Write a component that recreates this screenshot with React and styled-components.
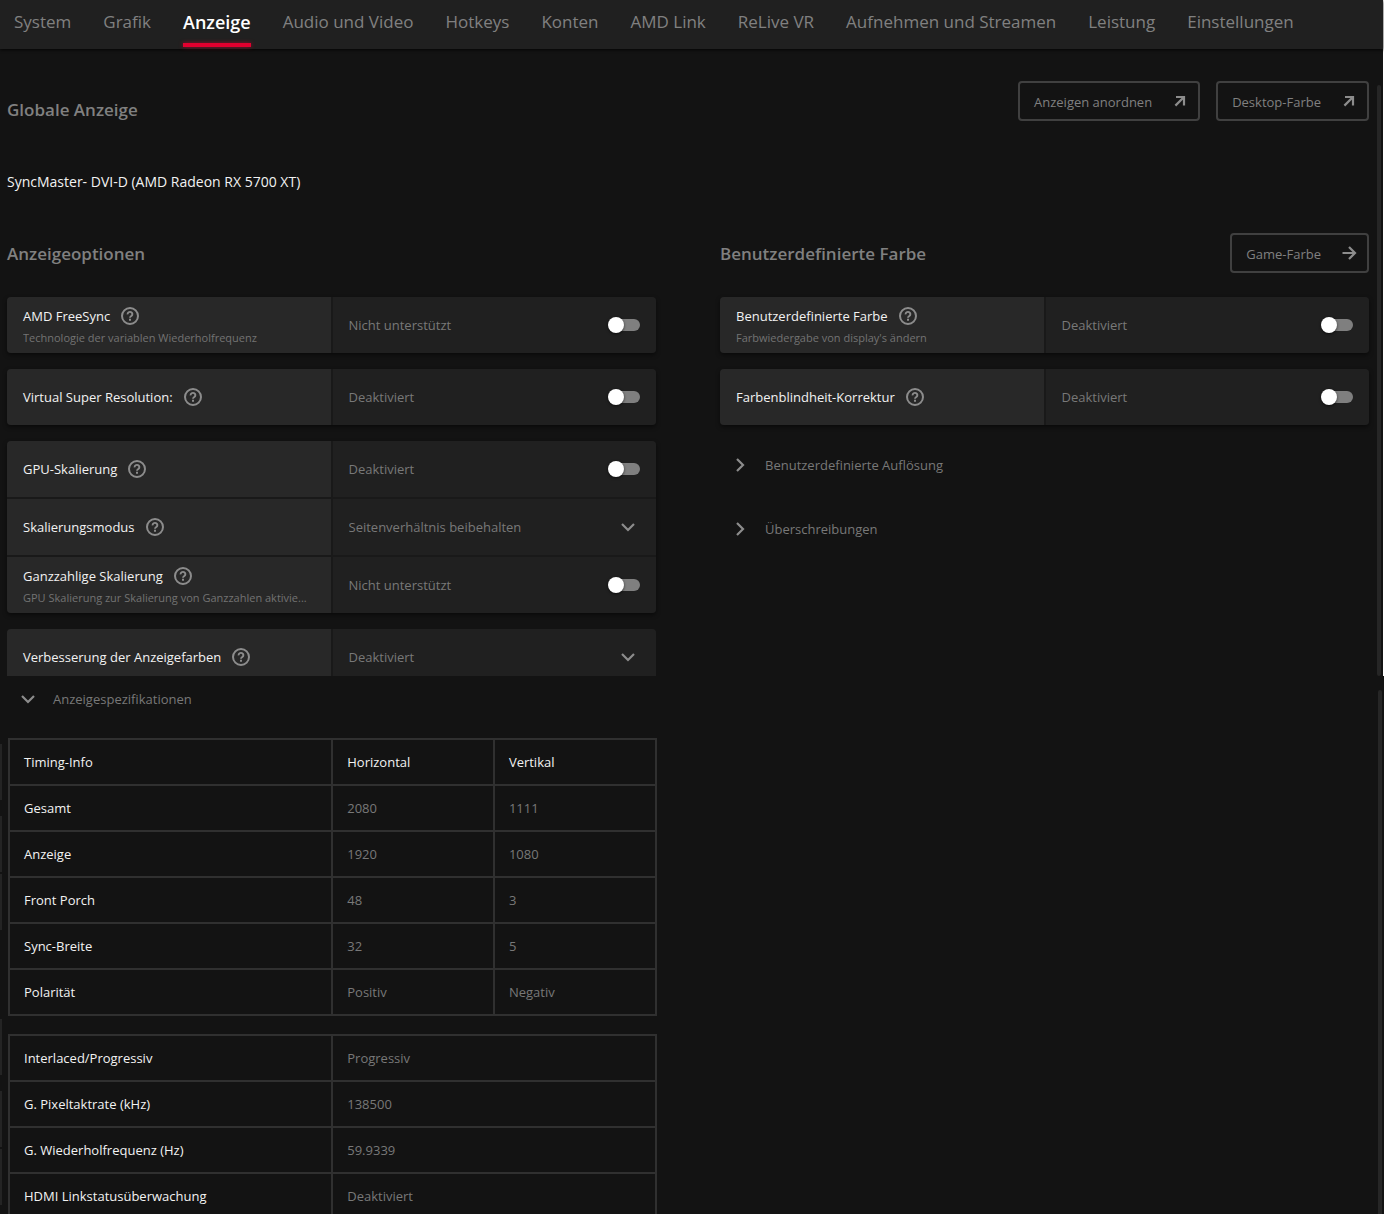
import React, { useState } from 'react';
import styled, { createGlobalStyle } from 'styled-components';

const GlobalStyle = createGlobalStyle`
  * {
    box-sizing: border-box;
  }

  body {
    margin: 0;
    background: #131313;
    color: #f2f2f2;
    font-family: 'Open Sans', 'Noto Sans', sans-serif;
    font-size: 13px;
    line-height: 20px;
    overflow: hidden;
  }

  button,
  select,
  input {
    font: inherit;
    margin: 0;
  }
`;

const MainWindow = styled.div`
  border-right: 1px solid #ffffff;
`;

const Nav = styled.nav`
  display: flex;
  gap: 32px;
  height: 49px;
  padding: 0 14px;
  background: #202020;
  box-shadow: 0 1px 3px rgba(0, 0, 0, 0.8);
`;

const NavLink = styled.a`
  height: 47px;
  padding-top: 10px;
  font-size: ${({ $active }) => ($active ? '18px' : '17px')};
  line-height: 24px;
  white-space: nowrap;
  text-decoration: none;
  font-weight: ${({ $active }) => ($active ? 600 : 400)};
  color: ${({ $active }) => ($active ? '#ffffff' : '#808080')};

  &::after {
    content: '';
    display: ${({ $active }) => ($active ? 'block' : 'none')};
    height: 4px;
    margin-top: 9px;
    background: #e2002f;
    box-shadow: 0 0 4px rgba(226, 0, 47, 0.6);
  }
`;

const Pane = styled.section`
  display: flex;
  padding-right: 2px;
`;

const PaneBody = styled.div`
  flex: 1;
  min-width: 0;
  padding: 0 8px 0 ${({ $left }) => $left};
`;

const ScrollTrack = styled.div`
  width: 4px;
  margin-top: ${({ $top }) => $top};
  border-radius: 2px;
  background: #262626;
`;

const HeaderRow = styled.header`
  display: flex;
  align-items: center;
  justify-content: space-between;
  height: 40px;
  margin-top: ${({ $top }) => $top || 0};
`;

const Heading = styled.h2`
  margin: 0;
  padding-top: ${({ $top }) => $top || '2px'};
  font-size: 17px;
  line-height: 24px;
  font-weight: 600;
  color: #808080;
`;

const ButtonGroup = styled.div`
  display: flex;
  gap: 16px;
`;

const OutlineButton = styled.button`
  display: flex;
  align-items: center;
  justify-content: space-between;
  gap: 20px;
  height: 40px;
  padding: 2px 10px 0 14px;
  border: 2px solid #404040;
  border-radius: 4px;
  background: none;
  color: #808080;
  cursor: pointer;
`;

const DisplayName = styled.p`
  margin: 51px 0 0;
  font-size: 14px;
`;

const Columns = styled.div`
  display: grid;
  grid-template-columns: 1fr 1fr;
  gap: 64px;
  margin-top: 41px;
`;

const Column = styled.div`
  min-width: 0;
`;

const Cards = styled.div`
  display: flex;
  flex-direction: column;
  gap: 16px;
  margin-top: 24px;
`;

const Card = styled.div`
  display: grid;
  gap: 2px;
  border-radius: 4px;
  background: #191919;
  box-shadow: 0 2px 4px rgba(0, 0, 0, 0.5);
  overflow: hidden;
  ${({ $cut }) => $cut && 'height: 47px; border-radius: 4px 4px 0 0; box-shadow: none;'}
`;

const CardRow = styled.div`
  display: grid;
  grid-template-columns: 1fr 1fr;
  gap: 2px;
  height: 56px;
`;

const LabelCell = styled.div`
  display: flex;
  flex-direction: column;
  justify-content: center;
  gap: 2px;
  min-width: 0;
  padding: ${({ $twoLines }) => ($twoLines ? '4px' : 0)} 16px 0;
  background: #282828;
`;

const LabelLine = styled.div`
  display: flex;
  align-items: center;
  gap: 10px;
`;

const HelpButton = styled.button`
  display: flex;
  padding: 0;
  border: 0;
  background: none;
  color: #8c8c8c;
  cursor: pointer;
`;

const Description = styled.div`
  font-size: 11px;
  overflow: hidden;
  text-overflow: ellipsis;
  white-space: nowrap;
  color: #737373;
`;

const ValueCell = styled.div`
  display: flex;
  align-items: center;
  justify-content: space-between;
  padding: 0 16px;
  background: #202020;
  color: #787878;
`;

const Switch = styled.input`
  appearance: none;
  display: grid;
  align-items: center;
  width: 32px;
  height: 16px;
  cursor: pointer;

  &::before,
  &::after {
    content: '';
    grid-area: 1 / 1;
  }

  &::before {
    height: 12px;
    border-radius: 6px;
    background: #7f7f7f;
    margin: 0 ${({ checked }) => (checked ? '2px 0 0' : '0 0 2px')};
  }

  &::after {
    justify-self: ${({ checked }) => (checked ? 'end' : 'start')};
    width: 16px;
    height: 16px;
    border-radius: 50%;
    background: #ffffff;
    box-shadow: 0 1px 3px rgba(0, 0, 0, 0.6);
  }
`;

const SelectWrap = styled.div`
  flex: 1;
  display: grid;
  align-items: center;

  select,
  svg {
    grid-area: 1 / 1;
  }

  svg {
    justify-self: end;
    margin-right: 4px;
    pointer-events: none;
  }
`;

const Select = styled.select`
  appearance: none;
  width: 100%;
  padding: 0;
  border: 0;
  background: none;
  color: inherit;
  cursor: pointer;
`;

const Expanders = styled.div`
  display: flex;
  flex-direction: column;
  gap: 44px;
  margin-top: 30px;
  padding-left: 12px;
`;

const ExpanderButton = styled.button`
  display: flex;
  align-items: center;
  gap: 17px;
  padding: 0;
  border: 0;
  background: none;
  color: #787878;
  cursor: pointer;
`;

const Specs = styled.div`
  width: calc(50% - 32px);
  padding: 13px 0 0 1px;
`;

const SpecsHeader = styled.div`
  padding-left: 12px;
`;

const SpecTable = styled.table`
  width: 100%;
  margin-top: ${({ $top }) => $top};
  border-collapse: collapse;
  table-layout: fixed;

  th,
  td {
    height: 46px;
    padding: 0 14px;
    border: 2px solid #303030;
    text-align: left;
    font-weight: 400;
  }

  td {
    color: #787878;
  }

  th:first-child {
    width: 50%;
  }
`;

/* Sliver of the card list that lies behind the lower pane */
const EdgeStrip = styled.div`
  display: flex;
  flex-direction: column;
  width: 2px;
  padding-top: 68px;
`;

const EdgeCard = styled.div`
  flex: none;
  height: 56px;
  margin-bottom: ${({ $gap }) => $gap};
  background: #242424;
`;

const NAV_ITEMS = [
  'System',
  'Grafik',
  'Anzeige',
  'Audio und Video',
  'Hotkeys',
  'Konten',
  'AMD Link',
  'ReLive VR',
  'Aufnehmen und Streamen',
  'Leistung',
  'Einstellungen',
];

const TIMING_ROWS = [
  ['Gesamt', '2080', '1111'],
  ['Anzeige', '1920', '1080'],
  ['Front Porch', '48', '3'],
  ['Sync-Breite', '32', '5'],
  ['Polarität', 'Positiv', 'Negativ'],
];

const SIGNAL_ROWS = [
  ['Interlaced/Progressiv', 'Progressiv'],
  ['G. Pixeltaktrate (kHz)', '138500'],
  ['G. Wiederholfrequenz (Hz)', '59.9339'],
  ['HDMI Linkstatusüberwachung', 'Deaktiviert'],
];

const ICON_PATHS = {
  down: 'M2 5l6 6 6-6',
  right: 'M5 2l6 6-6 6',
  arrow: 'M1.5 7h12.5M8 1l6 6-6 6',
  external: 'M4 3h8v8.5M12 3l-8.6 8.6',
};

function Icon({ name }) {
  return (
    <svg width="16" height="16" viewBox="0 0 16 16" fill="none" stroke="#8c8c8c" strokeWidth="2.2" aria-hidden="true">
      <path d={ICON_PATHS[name]} />
    </svg>
  );
}

function HelpIcon() {
  return (
    <svg width="20" height="20" viewBox="0 0 20 20" fill="none" stroke="currentColor" strokeWidth="2" aria-hidden="true">
      <circle cx="10" cy="10" r="8" />
      <path d="M7.6 8.3a2.4 2.2 0 1 1 3.8 1.6C10.5 10.5 10 10.8 10 11.8" strokeWidth="1.9" />
      <path d="M10 12.8v1.9" />
    </svg>
  );
}

function Setting({ id, label, description, value, options }) {
  const [checked, setChecked] = useState(false);

  return (
    <CardRow>
      <LabelCell $twoLines={!!description}>
        <LabelLine>
          <label htmlFor={id}>{label}</label>
          <HelpButton type="button" aria-label={`Hilfe: ${label}`}>
            <HelpIcon />
          </HelpButton>
        </LabelLine>
        {description && <Description>{description}</Description>}
      </LabelCell>
      <ValueCell>
        {options ? (
          <SelectWrap>
            <Select id={id}>
              {options.map(option => (
                <option key={option}>{option}</option>
              ))}
            </Select>
            <Icon name="down" />
          </SelectWrap>
        ) : (
          <>
            <span>{value}</span>
            <Switch
              id={id}
              type="checkbox"
              role="switch"
              checked={checked}
              onChange={e => setChecked(e.target.checked)}
            />
          </>
        )}
      </ValueCell>
    </CardRow>
  );
}

function Expander({ label, open }) {
  return (
    <ExpanderButton type="button" aria-expanded={!!open}>
      <Icon name={open ? 'down' : 'right'} />
      {label}
    </ExpanderButton>
  );
}

function App() {
  return (
    <>
      <GlobalStyle />
      <MainWindow>
        <Nav>
          {NAV_ITEMS.map(item => (
            <NavLink key={item} href="#" $active={item === 'Anzeige'}>
              {item}
            </NavLink>
          ))}
        </Nav>

        <Pane>
          <PaneBody $left="7px">
            <HeaderRow $top="32px">
              <Heading $top="18px">Globale Anzeige</Heading>
              <ButtonGroup>
                <OutlineButton type="button">
                  Anzeigen anordnen
                  <Icon name="external" />
                </OutlineButton>
                <OutlineButton type="button">
                  Desktop-Farbe
                  <Icon name="external" />
                </OutlineButton>
              </ButtonGroup>
            </HeaderRow>
            <DisplayName>SyncMaster- DVI-D (AMD Radeon RX 5700 XT)</DisplayName>

            <Columns>
              <Column>
                <HeaderRow>
                  <Heading>Anzeigeoptionen</Heading>
                </HeaderRow>
                <Cards>
                  <Card>
                    <Setting
                      id="freesync"
                      label="AMD FreeSync"
                      description="Technologie der variablen Wiederholfrequenz"
                      value="Nicht unterstützt"
                    />
                  </Card>
                  <Card>
                    <Setting id="vsr" label="Virtual Super Resolution:" value="Deaktiviert" />
                  </Card>
                  <Card>
                    <Setting id="gpu-scaling" label="GPU-Skalierung" value="Deaktiviert" />
                    <Setting id="scaling-mode" label="Skalierungsmodus" options={['Seitenverhältnis beibehalten']} />
                    <Setting
                      id="integer-scaling"
                      label="Ganzzahlige Skalierung"
                      description="GPU Skalierung zur Skalierung von Ganzzahlen aktivie..."
                      value="Nicht unterstützt"
                    />
                  </Card>
                  <Card $cut>
                    <Setting id="color-enhance" label="Verbesserung der Anzeigefarben" options={['Deaktiviert']} />
                  </Card>
                </Cards>
              </Column>

              <Column>
                <HeaderRow>
                  <Heading>Benutzerdefinierte Farbe</Heading>
                  <OutlineButton type="button">
                    Game-Farbe
                    <Icon name="arrow" />
                  </OutlineButton>
                </HeaderRow>
                <Cards>
                  <Card>
                    <Setting
                      id="custom-color"
                      label="Benutzerdefinierte Farbe"
                      description="Farbwiedergabe von display's ändern"
                      value="Deaktiviert"
                    />
                  </Card>
                  <Card>
                    <Setting id="color-blind" label="Farbenblindheit-Korrektur" value="Deaktiviert" />
                  </Card>
                </Cards>
                <Expanders>
                  <Expander label="Benutzerdefinierte Auflösung" />
                  <Expander label="Überschreibungen" />
                </Expanders>
              </Column>
            </Columns>
          </PaneBody>
          <ScrollTrack $top="36px" />
        </Pane>
      </MainWindow>

      <Pane>
        <EdgeStrip>
          <EdgeCard $gap="16px" />
          <EdgeCard $gap="2px" />
          <EdgeCard $gap="89px" />
          <EdgeCard $gap="16px" />
          <EdgeCard $gap="2px" />
          <EdgeCard $gap="2px" />
        </EdgeStrip>
        <PaneBody $left="5px">
          <Specs>
            <SpecsHeader>
              <Expander label="Anzeigespezifikationen" open />
            </SpecsHeader>
            <SpecTable $top="29px">
              <thead>
                <tr>
                  <th scope="col">Timing-Info</th>
                  <th scope="col">Horizontal</th>
                  <th scope="col">Vertikal</th>
                </tr>
              </thead>
              <tbody>
                {TIMING_ROWS.map(([label, horizontal, vertical]) => (
                  <tr key={label}>
                    <th scope="row">{label}</th>
                    <td>{horizontal}</td>
                    <td>{vertical}</td>
                  </tr>
                ))}
              </tbody>
            </SpecTable>
            <SpecTable $top="18px">
              <tbody>
                {SIGNAL_ROWS.map(([label, value]) => (
                  <tr key={label}>
                    <th scope="row">{label}</th>
                    <td>{value}</td>
                  </tr>
                ))}
              </tbody>
            </SpecTable>
          </Specs>
        </PaneBody>
        <ScrollTrack $top="14px" />
      </Pane>
    </>
  );
}

export default App;
